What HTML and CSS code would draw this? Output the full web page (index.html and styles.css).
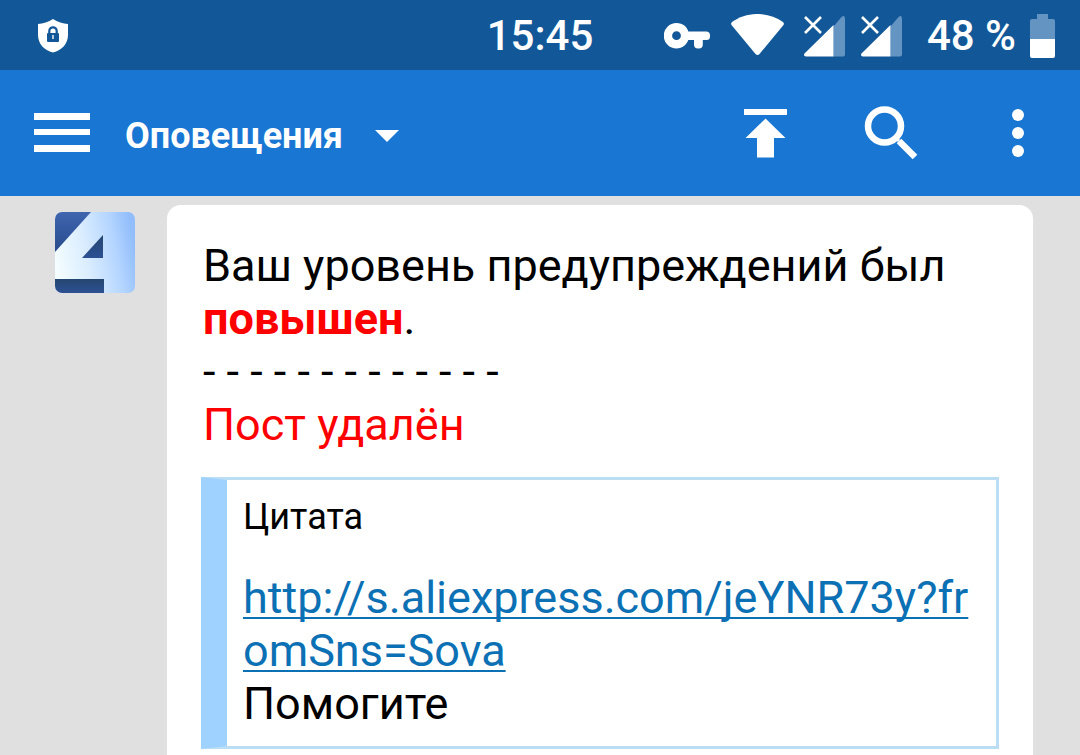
FILE: index.html
```html
<!DOCTYPE html>
<html lang="ru">
<head>
<meta charset="utf-8">
<meta name="viewport" content="width=device-width, initial-scale=1">
<title>Оповещения</title>
<link rel="stylesheet" href="styles.css">
</head>
<body>
<div class="status-bar">
  <div class="status-left">
    <svg class="icon" width="30" height="34" viewBox="0 0 30 34" aria-hidden="true">
      <path fill="#fff" d="M15 0C10.500 2.800 5 4.600 0 5v11c0 8.500 6 15.500 15 17.500C24 31.500 30 24.500 30 16V5C25 4.600 19.500 2.800 15 0z"/>
      <path fill="none" stroke="#125899" stroke-width="2.200" d="M11.300 16v-4a3.700 3.700 0 0 1 7.400 0v4"/>
      <rect x="9" y="14" width="12" height="9" rx="1" fill="#125899"/>
      <path stroke="#fff" stroke-width="1.400" d="M15 16v4"/>
    </svg>
  </div>
  <time class="status-text">15:45</time>
  <div class="status-right">
    <svg class="icon key" width="46" height="26" viewBox="0 0 46 26" aria-hidden="true">
      <path fill="#fff" fill-rule="evenodd" d="M12.500 0C19 0 23 4 24.300 8.500H42a4 4 0 0 1 4 4V13.500a3.500 3.500 0 0 1-3.500 3.500H38.800V21.500a4 4 0 0 1-4 4H34a4 4 0 0 1-4-4V17H24.300C22.500 21.500 18.500 25.500 12.500 25.500a12.750 12.750 0 0 1 0-25.500zM12.500 8.300a4.400 4.400 0 1 0 0 8.800 4.400 4.400 0 0 0 0-8.800z"/>
    </svg>
    <svg class="icon wifi" width="53" height="45" viewBox="0 0 53 45" aria-hidden="true">
      <path fill="#fff" d="M1 8C16-2.700 37-2.700 52 8Q53.500 9.500 52.500 11L28.500 40Q26.500 42 24.500 40L.5 11Q-.5 9.500 1 8z"/>
    </svg>
    <svg class="icon signal" width="41" height="42" viewBox="0 0 41 42" aria-hidden="true">
      <path fill="#6494c2" d="M29.500 11.500 37.500 2Q41-.5 41 4v35.500q0 2-2 2h-9.500z"/>
      <path fill="#fff" d="M29.500 10v31.500H2Q-1 41 .5 38.500z"/>
      <path stroke="#fff" stroke-width="2.600" d="M1 2l16 16M17 2L1 18"/>
    </svg>
    <svg class="icon level" width="41" height="42" viewBox="0 0 41 42" aria-hidden="true">
      <path fill="#6494c2" d="M29.500 11.500 37.500 2Q41-.5 41 4v35.500q0 2-2 2h-9.500z"/>
      <path fill="#fff" d="M29.500 10v31.500H2Q-1 41 .5 38.500z"/>
      <path stroke="#fff" stroke-width="2.600" d="M1 2l16 16M17 2L1 18"/>
    </svg>
    <span class="status-text">48 %</span>
    <svg class="icon battery" width="25" height="45" viewBox="0 0 25 45" aria-hidden="true">
      <path fill="#6494c2" d="M7 0h11v5h5q2 0 2 2v18H0V7q0-2 2-2h5z"/>
      <path fill="#fff" d="M0 25h25v17q0 2-2 2H2q-2 0-2-2z"/>
    </svg>
  </div>
</div>

<header class="app-bar">
  <button class="icon-button" type="button" aria-label="Меню">
    <svg class="icon" width="56" height="40" viewBox="0 0 56 40"><path fill="#fff" d="M0 0h56v7H0zM0 16h56v6H0zM0 32h56v7H0z"/></svg>
  </button>
  <button class="title-button" type="button">
    Оповещения
    <svg class="icon" width="24" height="12" viewBox="0 0 24 12" aria-hidden="true"><path fill="#fff" d="M0 0h24L12 12z"/></svg>
  </button>
  <div class="actions">
    <button class="icon-button" type="button" aria-label="Наверх">
      <svg class="icon" width="43" height="50" viewBox="0 0 43 50"><path fill="#fff" d="M0 1h43v6H0zM21.500 10.500 41.500 30H30v19.500H13V30H1.500z"/></svg>
    </button>
    <button class="icon-button" type="button" aria-label="Поиск">
      <svg class="icon" width="54" height="54" viewBox="0 0 54 54"><circle cx="20.500" cy="20" r="16.500" fill="none" stroke="#fff" stroke-width="6.500"/><path stroke="#fff" stroke-width="3" d="M31 31l4 4"/><path stroke="#fff" stroke-width="6.500" d="M35 35l16 16"/></svg>
    </button>
    <button class="icon-button" type="button" aria-label="Ещё">
      <svg class="icon" width="12" height="50" viewBox="0 0 12 50"><g fill="#fff"><circle cx="6" cy="7" r="6"/><circle cx="6" cy="25" r="6"/><circle cx="6" cy="43" r="6"/></g></svg>
    </button>
  </div>
</header>

<main class="feed">
  <svg class="avatar" width="80" height="81" viewBox="0 0 80 81" role="img" aria-label="4PDA">
    <defs>
      <linearGradient id="face" x1="0" y1=".6" x2="1" y2=".4">
        <stop offset="0" stop-color="#f4fdff"/>
        <stop offset=".4" stop-color="#d9ecff"/>
        <stop offset=".75" stop-color="#b4d5ff"/>
        <stop offset="1" stop-color="#91bdfb"/>
      </linearGradient>
      <linearGradient id="corner" x1="0" y1="0" x2="0" y2="1">
        <stop offset="0" stop-color="#3f65b0"/>
        <stop offset="1" stop-color="#294b8c"/>
      </linearGradient>
      <linearGradient id="shade" x1="0" y1="0" x2="0" y2="1">
        <stop offset="0" stop-color="#244671"/>
        <stop offset="1" stop-color="#2d5094"/>
      </linearGradient>
      <clipPath id="tile"><rect width="80" height="81" rx="7"/></clipPath>
    </defs>
    <g clip-path="url(#tile)">
      <path fill="url(#face)" d="M0 0h80v81H0z"/>
      <path fill="url(#corner)" d="M0 0h36L0 40z"/>
      <path fill="url(#shade)" d="M48 23v23H27z"/>
      <path fill="url(#shade)" d="M0 67h49v14H0z"/>
    </g>
  </svg>
  <article class="card">
    <p class="message">Ваш уровень предупреждений был <strong class="alert">повышен</strong>.<br>- - - - - - - - - - - - -<br><span class="alert">Пост удалён</span></p>
    <blockquote class="quote">
      <div class="quote-title">Цитата</div>
      <p class="message"><a class="link" href="http://s.aliexpress.com/jeYNR73y?fromSns=Sova">http://s.aliexpress.com/jeYNR73y?fromSns=Sova</a><br>Помогите</p>
    </blockquote>
  </article>
</main>
</body>
</html>
```
FILE: styles.css
```css
* {
  box-sizing: border-box;
}

body {
  display: flex;
  flex-direction: column;
  min-height: 100vh;
  margin: 0;
  background: #e0e0e0;
  color: #000;
  font-family: Roboto, "Noto Sans", sans-serif;
}

button {
  margin: 0;
  padding: 0;
  border: 0;
  background: none;
  color: inherit;
  font: inherit;
  cursor: pointer;
}

.icon {
  display: block;
  flex: none;
}

.status-bar {
  display: grid;
  grid-template-columns: 1fr auto 1fr;
  align-items: center;
  height: 70px;
  padding: 2px 25px 0;
  background: #125899;
  color: #fff;
}

.status-left {
  padding-left: 13px;
}

.status-text {
  font-size: 42px;
  font-weight: 500;
  line-height: 48px;
  white-space: nowrap;
}

.status-right {
  display: flex;
  align-items: center;
  justify-content: flex-end;
}

.key {
  margin-right: 21px;
}

.wifi {
  margin-right: 20px;
}

.signal {
  margin-right: 16px;
}

.level {
  margin-right: 25px;
}

.battery {
  margin-left: 14px;
}

.app-bar {
  display: flex;
  align-items: center;
  height: 126px;
  padding: 0 56px 0 34px;
  background: #1976d2;
  color: #fff;
}

.title-button {
  display: flex;
  align-items: center;
  gap: 32px;
  margin-left: 35px;
  padding-top: 5px;
  font-size: 36px;
  font-weight: 700;
  line-height: 42px;
}

.actions {
  display: flex;
  align-items: center;
  gap: 94px;
  margin-left: auto;
}

.actions .icon-button:nth-child(2) {
  margin-left: -17px;
}

.feed {
  display: flex;
  flex: 1;
  align-items: stretch;
  gap: 32px;
  padding: 9px 47px 0 55px;
}

.avatar {
  flex: none;
  margin-top: 7px;
}

.card {
  flex: 1;
  min-width: 0;
  padding: 34px 34px 7px;
  border-radius: 14px 14px 0 0;
  background: #fff;
}

.message {
  margin: 0;
  font-size: 45px;
  line-height: 53px;
}

.card > .message {
  padding-left: 2px;
}

.alert {
  color: #f00;
}

.quote {
  margin: 26px 0 0;
  padding: 16px;
  border: 3px solid #bbdef5;
  border-left: 26px solid #9fd2ff;
}

.quote-title {
  margin-bottom: 33px;
  font-size: 36px;
  line-height: 42px;
}

.link {
  color: #0c70b4;
  text-decoration: underline;
  text-decoration-thickness: 2px;
  text-underline-offset: 4px;
  text-decoration-skip-ink: none;
  word-break: break-all;
}
```
